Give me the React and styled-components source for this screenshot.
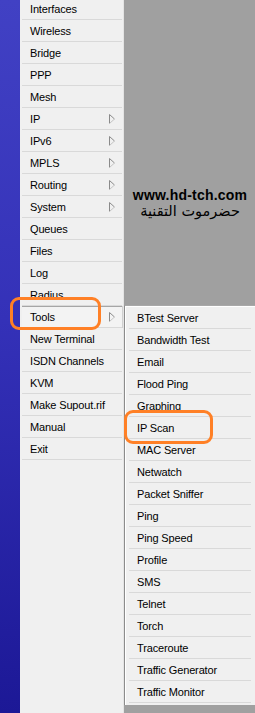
import React from "react";
import styled, { createGlobalStyle } from "styled-components";

const GlobalStyle = createGlobalStyle`
  html, body {
    margin: 0;
    padding: 0;
    background: #a0a0a0;
  }
  body {
    font-family: "Liberation Sans", Arial, sans-serif;
  }
`;

const Screen = styled.div`
  position: relative;
  width: 255px;
  height: 713px;
  display: flex;
  overflow: hidden;
  background: #a0a0a0;
`;

const SideStrip = styled.div`
  width: 20px;
  flex-shrink: 0;
  background: linear-gradient(180deg, #4141c4 0%, #3431b8 45%, #1c1896 100%);
`;

const MainMenu = styled.div`
  width: 103px;
  flex-shrink: 0;
  background: #f0f0f0;
  border-right: 1px solid #e4e4e4;
  display: flex;
  flex-direction: column;
  margin-top: -2px;
`;

const Row = styled.div`
  position: relative;
  height: 21px;
  margin-left: 2px;
  margin-right: 1px;
  border-bottom: 1px solid #d9d9d9;
  display: flex;
  align-items: center;
  justify-content: space-between;
  padding-left: ${({ $indent }) => $indent}px;
  padding-right: 7px;
  font-size: 11px;
  letter-spacing: -0.15px;
  color: #000;
  white-space: nowrap;
  background: ${({ $selected }) => ($selected ? "#f3f3f3" : "transparent")};
  box-shadow: ${({ $selected }) =>
    $selected ? "inset 0 1px 0 #a6a6a6, 1px 0 0 #d0d0d0" : "none"};
`;

const Arrow = () => (
  <svg width="6" height="10" viewBox="0 0 6 10">
    <path d="M0.5 0.5 V9.5" stroke="#8a8a8a" strokeWidth="1" fill="none" />
    <path d="M0.5 0.5 L5.5 5" stroke="#8a8a8a" strokeWidth="1" fill="none" />
    <path d="M5.5 5 L0.5 9.5" stroke="#c4c4c4" strokeWidth="1" fill="none" />
  </svg>
);

const Desk = styled.div`
  flex: 1;
  display: flex;
  flex-direction: column;
  align-items: stretch;
`;

const Watermark = styled.div`
  margin-top: 187px;
  height: 118px;
  display: flex;
  flex-direction: column;
  align-items: center;
  color: #000;
`;

const Site = styled.div`
  font-family: "Liberation Sans", Arial, sans-serif;
  font-weight: bold;
  font-size: 14px;
  letter-spacing: 0.2px;
  line-height: 17px;
`;

const Arabic = styled.div`
  font-family: "DejaVu Sans", "Noto Sans", sans-serif;
  font-size: 14.5px;
  line-height: 16px;
  margin-top: -1px;
  direction: rtl;
`;

const SubMenu = styled.div`
  width: 131px;
  height: 398px;
  background: #f0f0f0;
  border-top: 1px solid #a8a8a8;
  border-left: 1px solid #8c8c8c;
  box-shadow: inset 1px 1px 0 #ffffff;
  padding-top: 1px;
  display: flex;
  flex-direction: column;
`;

const SubRow = styled(Row)`
  margin-left: 4px;
  margin-right: 5px;
`;

const Highlight = styled.div`
  position: absolute;
  left: ${({ $x }) => $x}px;
  top: ${({ $y }) => $y}px;
  width: ${({ $w }) => $w}px;
  height: ${({ $h }) => $h}px;
  border: 3.5px solid #ff8026;
  border-radius: 9px;
  box-sizing: border-box;
  pointer-events: none;
`;

const mainItems = [
  { label: "Interfaces" },
  { label: "Wireless" },
  { label: "Bridge" },
  { label: "PPP" },
  { label: "Mesh" },
  { label: "IP", sub: true },
  { label: "IPv6", sub: true },
  { label: "MPLS", sub: true },
  { label: "Routing", sub: true },
  { label: "System", sub: true },
  { label: "Queues" },
  { label: "Files" },
  { label: "Log" },
  { label: "Radius" },
  { label: "Tools", sub: true, selected: true },
  { label: "New Terminal" },
  { label: "ISDN Channels" },
  { label: "KVM" },
  { label: "Make Supout.rif" },
  { label: "Manual" },
  { label: "Exit" },
];

const toolItems = [
  "BTest Server",
  "Bandwidth Test",
  "Email",
  "Flood Ping",
  "Graphing",
  "IP Scan",
  "MAC Server",
  "Netwatch",
  "Packet Sniffer",
  "Ping",
  "Ping Speed",
  "Profile",
  "SMS",
  "Telnet",
  "Torch",
  "Traceroute",
  "Traffic Generator",
  "Traffic Monitor",
];

const App = () => {
  return (
    <>
      <GlobalStyle />
      <Screen>
        <SideStrip />
        <MainMenu>
          {mainItems.map((item) => (
            <Row key={item.label} $indent={8} $selected={item.selected}>
              <span>{item.label}</span>
              {item.sub && <Arrow />}
            </Row>
          ))}
        </MainMenu>
        <Desk>
          <Watermark>
            <Site>www.hd-tch.com</Site>
            <Arabic>حضرموت التقنية</Arabic>
          </Watermark>
          <SubMenu>
            {toolItems.map((label) => (
              <SubRow key={label} $indent={8}>
                <span>{label}</span>
              </SubRow>
            ))}
          </SubMenu>
        </Desk>
        <Highlight $x={10} $y={297} $w={91} $h={33} />
        <Highlight $x={124} $y={410} $w={89} $h={34} />
      </Screen>
    </>
  );
};

export default App;
